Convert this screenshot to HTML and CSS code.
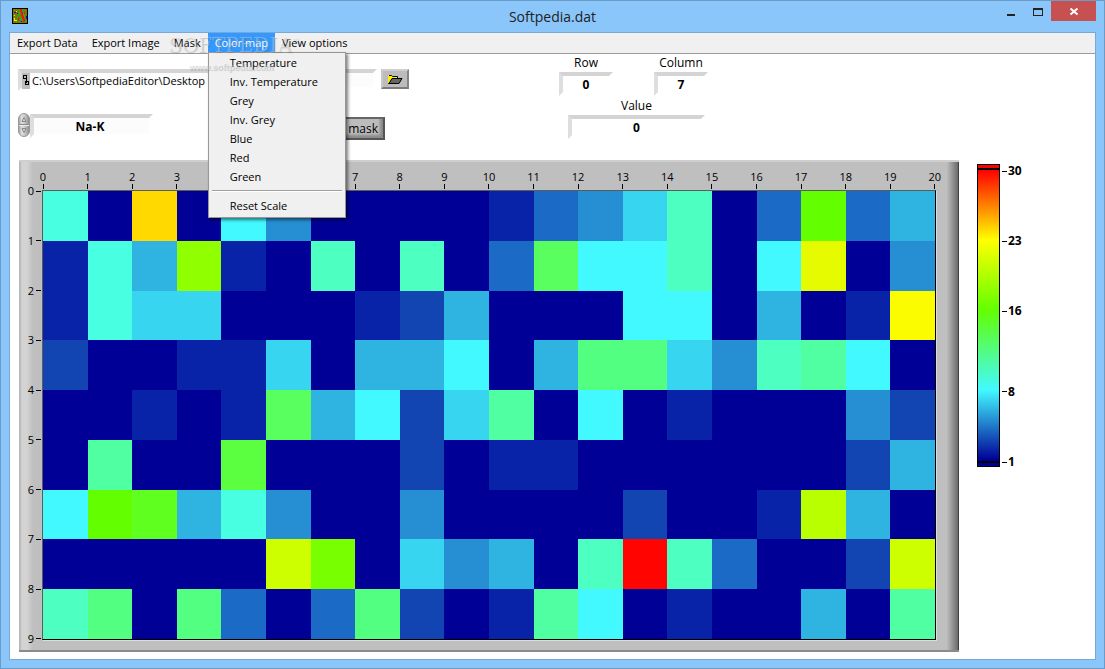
FILE: index.html
```html
<!DOCTYPE html>
<html lang="en">
<head>
<meta charset="utf-8">
<title>Softpedia.dat</title>
<link rel="stylesheet" href="styles.css">
</head>
<body>
<div class="window">
  <header class="titlebar">
    <svg class="app-icon" width="16" height="16" viewBox="0 0 16 16" shape-rendering="crispEdges" aria-hidden="true">
      <path fill="#000" d="M0 0h16v16H0z"/><path fill="#7d7a00" d="M1 1h14v14H1z"/>
      <path fill="#e81818" d="M8 1h2v3h1v4h1v3h1v3h-2v-3h-1V8H9V4H8zM6 10h1v3H6zM12 4h1v2h-1z"/>
      <path fill="#18b030" d="M7 2h1v4H7zM6 6h2v2H6zM5 8h1v2H5zM10 2h2v1h-2zM11 5h1v2h-1zM12 7h1v3h-1zM8 10h2v2H8zM4 13h3v1H4zM13 12h1v2h-1z"/>
      <path fill="#1010e0" d="M2 4h2v1H2zM14 8h1v3h-1zM5 5h1v1H5zM9 13h1v1H9z"/>
      <path fill="#f0f000" d="M2 7h1v1H2zM2 10h1v2h2v1H2zM4 3h1v1H4z"/>
    </svg>
    <h1 class="title">Softpedia.dat</h1>
    <div class="controls">
      <button class="control" type="button" aria-label="Minimize"><svg width="12" height="12" viewBox="0 0 12 12" shape-rendering="crispEdges"><path fill="#222" d="M2 9h8v2H2z"/></svg></button>
      <button class="control" type="button" aria-label="Maximize"><svg width="12" height="12" viewBox="0 0 12 12" shape-rendering="crispEdges"><path fill="#222" fill-rule="evenodd" d="M1 3h10v8H1zM2 5v5h8V5z"/></svg></button>
      <button class="control close" type="button" aria-label="Close"><svg width="12" height="12" viewBox="0 0 12 12"><path stroke="#fff" stroke-width="2" d="M2.500 3.500l7 6M9.500 3.500l-7 6"/></svg></button>
    </div>
  </header>

  <main class="client">
    <nav class="menubar">
      <button class="menu-title" type="button">Export Data</button>
      <button class="menu-title" type="button">Export Image</button>
      <button class="menu-title" type="button">Mask</button>
      <div class="menu-open">
        <button class="menu-title active" type="button" aria-expanded="true">Color map</button>
        <div class="menu">
          <button class="menu-item" type="button">Temperature</button>
          <button class="menu-item" type="button">Inv. Temperature</button>
          <button class="menu-item" type="button">Grey</button>
          <button class="menu-item" type="button">Inv. Grey</button>
          <button class="menu-item" type="button">Blue</button>
          <button class="menu-item" type="button">Red</button>
          <button class="menu-item" type="button">Green</button>
          <hr class="separator">
          <button class="menu-item" type="button">Reset Scale</button>
        </div>
      </div>
      <button class="menu-title" type="button">View options</button>
      <div class="watermark" aria-hidden="true"><span class="brand">SOFTPEDIA<sup class="tm">™</sup></span><span class="site">www.softpedia.com</span></div>
    </nav>

    <section class="toolbar">
      <div class="inputs">
        <div class="input-row">
          <div class="path bevel">
            <svg class="path-icon" width="8" height="16" viewBox="0 0 8 16" shape-rendering="crispEdges" aria-hidden="true"><path fill="none" stroke="#000" d="M1.500 2.500h3v3h-3zM4.500 5.500v4M3.500 8.500h3v3h-3z"/></svg>
            <input class="field path-field" type="text" aria-label="Data file path" value="C:\Users\SoftpediaEditor\Desktop">
          </div>
          <button class="tool browse" type="button" aria-label="Browse">
            <svg width="16" height="11" viewBox="0 0 16 11"><path fill="#ffee00" stroke="#000" d="M1.500 9.500v-8h3l1 1h5v2h-5l-3 5z"/><path fill="#666" stroke="#000" d="M2 9.500l3-5h10l-3 5z"/><path stroke="#ffee00" d="M1.500 1v8M1 3.500h4"/></svg>
          </button>
        </div>
        <div class="input-row">
          <button class="spinner" type="button" aria-label="Change channel">
            <svg width="12" height="24" viewBox="0 0 12 24"><defs><linearGradient id="knob"><stop stop-color="#999"/><stop offset=".3" stop-color="#e2e2e2"/><stop offset=".6" stop-color="#c4c4c4"/><stop offset="1" stop-color="#888"/></linearGradient></defs><rect x=".5" y=".5" width="11" height="23" rx="5.500" fill="url(#knob)" stroke="#999"/><path stroke="#888" d="M1 11.500h10"/><path stroke="#eee" d="M1 12.500h10"/><path fill="#d8d8d8" stroke="#888" d="M4 8.500l2-4 2 4zM4 15.500h4l-2 4z"/></svg>
          </button>
          <input class="field bevel channel" type="text" aria-label="Channel" value="Na-K">
          <button class="tool mask" type="button">mask</button>
        </div>
      </div>
      <div class="readouts">
        <div class="readout"><label for="row">Row</label><output class="bevel value" id="row">0</output></div>
        <div class="readout"><label for="column">Column</label><output class="bevel value" id="column">7</output></div>
        <div class="readout wide"><label for="value">Value</label><output class="bevel value" id="value">0</output></div>
      </div>
    </section>

    <section class="workspace">
      <div class="chart">
        <div class="x-axis" id="x-axis"></div>
        <div class="y-axis" id="y-axis"></div>
        <div class="plot" id="plot" role="img" aria-label="Intensity by row and column"></div>
      </div>
      <aside class="legend">
        <div class="ramp"></div>
        <div class="stops">
          <span class="stop">30</span><span class="stop">23</span><span class="stop">16</span><span class="stop">8</span><span class="stop">1</span>
        </div>
      </aside>
    </section>
  </main>
</div>
<script src="app.js"></script>
</body>
</html>
```
FILE: styles.css
```css
* { box-sizing: border-box; }

body {
  margin: 0;
  font: 12px/16px "Open Sans", "Noto Sans", sans-serif;
  color: #000;
}

button, input { font: inherit; color: inherit; border: 0; margin: 0; padding: 0; background: none; }
svg { display: block; }

.window {
  display: flex;
  flex-direction: column;
  min-height: 100vh;
  padding: 0 8px 8px;
  border: 1px solid #6b9bc7;
  background: #8bc6fb;
}

/* Title bar */
.titlebar {
  display: grid;
  grid-template-columns: 1fr auto 1fr;
  height: 31px;
}
.app-icon { margin: 7px 0 0 3px; }
.title { margin: 0; font-size: 14px; font-weight: 400; line-height: 31px; color: #222; }
.controls { display: flex; justify-content: flex-end; align-items: flex-start; }
.control { display: grid; place-items: center; width: 27px; height: 20px; }
.close { width: 45px; background: #c75050; }

.client {
  flex: 1;
  display: flex;
  flex-direction: column;
  border: 1px solid #78a8d5;
  background: #fff;
}

/* Menus */
.menubar {
  position: relative;
  display: flex;
  height: 21px;
  background: #f0f0f0;
  border-bottom: 1px solid #9c9c9c;
  font-size: 11px;
}
.menu-title { height: 19px; padding: 0 7px; white-space: nowrap; }
.menu-open { position: relative; }
.active { background: #3399ff; color: #fff; }
.menu {
  position: absolute;
  z-index: 2;
  top: 19px;
  left: 0;
  width: 138px;
  padding: 0 3px 2px;
  border: 1px solid #979797;
  background: #f0f0f0;
  box-shadow: 2px 2px 3px rgba(0, 0, 0, .5);
}
.menu-item { display: block; width: 100%; height: 19px; padding-left: 18px; text-align: left; }
.separator { height: 2px; margin: 4px 0; border: 0; border-top: 1px solid #a0a0a0; background: #fff; }

.watermark {
  position: absolute;
  z-index: 3;
  top: 1px;
  left: 158px;
  display: flex;
  flex-direction: column;
  color: rgba(255, 255, 255, .3);
  text-shadow: 1px 1px 1px rgba(90, 90, 90, .3);
  pointer-events: none;
}
.brand { font: 20px/22px "DejaVu Serif", serif; }
.tm { font-size: 8px; line-height: 8px; }
.site { padding: 4px 0 0 21px; font: bold 9px/14px "Liberation Sans", sans-serif; }

/* Toolbar */
.toolbar { display: flex; padding-left: 8px; height: 106px; }
.inputs { display: flex; flex-direction: column; gap: 22px; width: 391px; padding-top: 15px; }
.input-row { display: flex; align-items: flex-start; }
.bevel {
  border: 4px solid;
  border-color: #d4d4d4 transparent transparent #dedede;
  background: #fcfcfc padding-box;
}
.path { flex: 1; display: flex; height: 22px; margin-bottom: -2px; }
.path-icon { background: #bdbdbd; }
.path-field { flex: 1; min-width: 0; height: 16px; padding-left: 2px; font-size: 11px; }
.tool {
  display: grid;
  place-items: center;
  border: 2px solid;
  border-color: #cfcfcf #858585 #7c7c7c #c8c8c8;
  background: #bcbcbc;
}
.browse { width: 28px; height: 20px; margin: 0 0 0 4px; }
.spinner { margin-top: 2px; }
.channel { width: 123px; height: 24px; margin-top: 3px; padding-right: 3px; font-weight: 700; text-align: center; }
.mask {
  justify-content: end;
  width: 72px;
  height: 23px;
  margin: 6px 24px 0 auto;
  padding-right: 5px;
  border-color: #666 #555 #555 #666;
  box-shadow: inset -3px -3px 3px #888;
}

.readouts {
  display: grid;
  grid-template-columns: 54px 54px;
  column-gap: 41px;
  row-gap: 2px;
  align-content: start;
  margin-left: 150px;
  padding-top: 1px;
}
.readout { display: flex; flex-direction: column; gap: 1px; text-align: center; }
.wide { grid-column: 1 / -1; margin: 0 3px 0 9px; }
.value { height: 24px; background-color: #fff; font-weight: 700; line-height: 18px; }

/* Heat map */
.workspace { flex: 1; display: flex; padding: 0 0 7px 9px; }
.chart {
  flex: 1;
  display: grid;
  grid-template: 30px 1fr / 23px 1fr;
  padding: 0 23px 12px 0;
  background:
    linear-gradient(#cfcfcf, #cfcfcf) top / 100% 2px no-repeat,
    linear-gradient(#8b8b8b, #8b8b8b) bottom / 100% 2px no-repeat,
    linear-gradient(90deg, #bdbdbd, #6c6c6c 90%, #404040 92%) right / 12px 100% no-repeat,
    linear-gradient(90deg, #b8b8b8 1px, #d3d3d3 3px, #d3d3d3 8px, #bfbfbf) left / 14px 100% no-repeat,
    #bfbfbf;
}
.x-axis {
  grid-column: 2;
  display: flex;
  justify-content: space-between;
  align-items: flex-end;
  padding: 0 1px;
  font-size: 11px;
  line-height: 14px;
}
.x-mark { display: flex; flex-direction: column; align-items: center; width: 0; }
.x-mark::after { content: ""; width: 1px; height: 5px; margin-bottom: 1px; background: #000; }
.y-axis {
  display: flex;
  flex-direction: column;
  justify-content: space-between;
  padding: 1px 1px 1px 0;
  font-size: 11px;
}
.y-mark { display: flex; align-items: center; justify-content: flex-end; gap: 2px; height: 0; }
.y-mark::after { content: ""; width: 5px; height: 1px; background: #000; }
.plot {
  display: grid;
  grid-template: repeat(9, 1fr) / repeat(20, 1fr);
  border: 1px solid;
  border-color: #5b5b5b #000 #000 #5b5b5b;
  box-shadow: 1px 1px 0 #dcdcdc;
}

/* Colour legend */
.legend { display: flex; gap: 2px; width: 136px; padding: 4px 0 0 18px; }
.ramp {
  width: 23px;
  height: 303px;
  border: 1px solid #000;
  background:
    linear-gradient(#f00 3px, #000 3px, #000 5px, transparent 5px) top / 100% 5px no-repeat,
    linear-gradient(#000 2px, #000096 2px) bottom / 100% 5px no-repeat,
    linear-gradient(#f00 5px, #ff0 75px, #63ff00 145px, #42f9ff 225px, #000096 295px);
}
.stops { display: grid; grid-template-rows: 7fr 7fr 8fr 7fr 0; height: 291px; margin-top: 7px; font-weight: 700; }
.stop { display: flex; align-items: center; gap: 1px; height: 0; }
.stop::before { content: ""; width: 5px; height: 1px; background: #000; }

/* Intensity levels, low to high */
.l0 { background: #000096; }
.l1 { background: #0823a8; }
.l2 { background: #1244b2; }
.l3 { background: #1b6ac6; }
.l4 { background: #268fd3; }
.l5 { background: #2fb3e1; }
.l6 { background: #38d5f1; }
.l7 { background: #42f9ff; }
.l8 { background: #48ffe2; }
.l9 { background: #4dffc0; }
.lA { background: #50ffa2; }
.lB { background: #53ff80; }
.lC { background: #59ff5e; }
.lD { background: #5cff40; }
.lE { background: #5fff20; }
.lF { background: #63ff00; }
.lG { background: #78ff00; }
.lH { background: #90ff00; }
.lI { background: #baff00; }
.lJ { background: #ceff00; }
.lK { background: #e6fa00; }
.lL { background: #fcfc00; }
.lM { background: #ffd900; }
.lR { background: #ff0400; }
```
FILE: app.js
```js
// One character per cell, naming the intensity level class.
const rows = [
  "80M07400001346903F35",
  "185H1090903C77907K04",
  "1866000125000770501L",
  "200116055705BB649A70",
  "00101C5726A070100042",
  "0A00D000201100000025",
  "7FE58400400002001I50",
  "00000JG064509R93002J",
  "9B0B303B201A7010050A"
];

function addMarks(id, name, count) {
  const axis = document.getElementById(id);
  for (let i = 0; i <= count; i++) {
    const mark = document.createElement("span");
    mark.className = name;
    mark.textContent = i;
    axis.append(mark);
  }
}

const plot = document.getElementById("plot");
for (const level of rows.join("")) {
  const cell = document.createElement("div");
  cell.className = "l" + level;
  plot.append(cell);
}
addMarks("x-axis", "x-mark", 20);
addMarks("y-axis", "y-mark", 9);
```
